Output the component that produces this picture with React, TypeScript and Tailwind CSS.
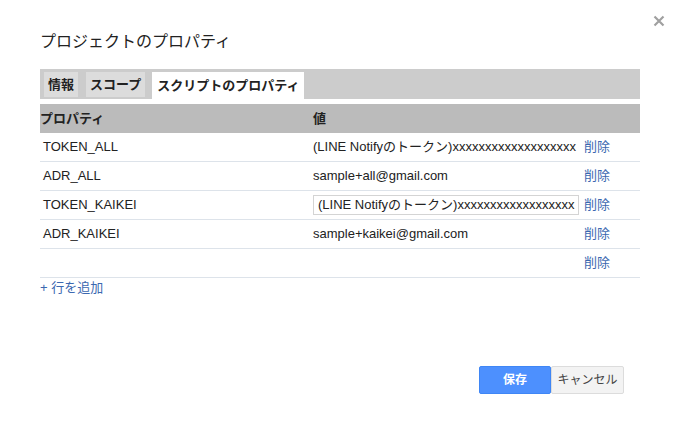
import React from 'react';

interface PropRow {
    key: string;
    value: string;
    editing?: boolean;
}

const rows: PropRow[] = [
    { key: 'TOKEN_ALL', value: '(LINE Notifyのトークン)xxxxxxxxxxxxxxxxxxx' },
    { key: 'ADR_ALL', value: 'sample+all@gmail.com' },
    { key: 'TOKEN_KAIKEI', value: '(LINE Notifyのトークン)xxxxxxxxxxxxxxxxxx', editing: true },
    { key: 'ADR_KAIKEI', value: 'sample+kaikei@gmail.com' },
    { key: '', value: '' },
];

const tabs = ['情報', 'スコープ', 'スクリプトのプロパティ'];

const App: React.FC = () => {
    return (
        <div className="relative w-[681px] h-[422px] bg-white text-[#222] font-['Liberation_Sans','Noto_Sans_CJK_JP',sans-serif]">
            {/* close */}
            <button className="absolute top-[14px] right-[15px] w-[14px] h-[14px] flex items-center justify-center">
                <svg width="12" height="12" viewBox="0 0 12 12">
                    <path d="M1.5 1.5 L10.5 10.5 M10.5 1.5 L1.5 10.5" stroke="#a0a0a0" strokeWidth="2.2" />
                </svg>
            </button>

            <div className="pl-[40px] pt-[30px] w-[640px]">
                <h1 className="text-[16px] leading-[24px]">プロジェクトのプロパティ</h1>

                {/* tabs */}
                <div className="mt-[15px] h-[30px] bg-[#cccccc] flex items-end gap-[8px] px-[4px]">
                    {tabs.map((tab, i) => {
                        const active = i === tabs.length - 1;
                        return (
                            <div
                                key={tab}
                                className={
                                    active
                                        ? 'h-[27px] px-[5px] bg-white text-[13px] font-bold leading-[27px] -ml-[1px]'
                                        : 'h-[25px] mb-[2px] px-[4px] bg-[#dcdcdc] text-[13px] font-bold leading-[25px]'
                                }
                            >
                                {tab}
                            </div>
                        );
                    })}
                </div>

                {/* header */}
                <div className="mt-[5px] h-[29px] bg-[#bbbbbb] flex items-center text-[13px] font-bold">
                    <div className="w-[273px]">プロパティ</div>
                    <div>値</div>
                </div>

                {/* rows */}
                {rows.map((row, index) => (
                    <div
                        key={index}
                        className="h-[29px] border-b border-[#dde3ea] flex items-center text-[13px]"
                    >
                        <div className="w-[273px] pl-[3px]">{row.key}</div>
                        <div className="w-[271px] whitespace-nowrap">
                            {row.editing ? (
                                <div className="w-[266px] h-[20px] border border-[#d4d4d4] pl-[4px] leading-[18px] whitespace-nowrap">
                                    {row.value}
                                </div>
                            ) : (
                                row.value
                            )}
                        </div>
                        <a className="text-[#3b68b0] cursor-pointer">削除</a>
                    </div>
                ))}

                <a className="block mt-[1px] text-[13px] leading-[18px] text-[#3b68b0] cursor-pointer">+ 行を追加</a>

                {/* actions */}
                <div className="mt-[69px] pr-[16px] flex justify-end">
                    <button className="w-[72px] h-[28px] rounded-[2px] bg-[#4d90fe] border border-[#3f86f5] text-white text-[12px] font-bold">
                        保存
                    </button>
                    <button className="w-[73px] h-[28px] rounded-[2px] bg-[#f3f3f3] border border-[#dcdcdc] text-[#444] text-[12px]">
                        キャンセル
                    </button>
                </div>
            </div>
        </div>
    );
};

export default App;
